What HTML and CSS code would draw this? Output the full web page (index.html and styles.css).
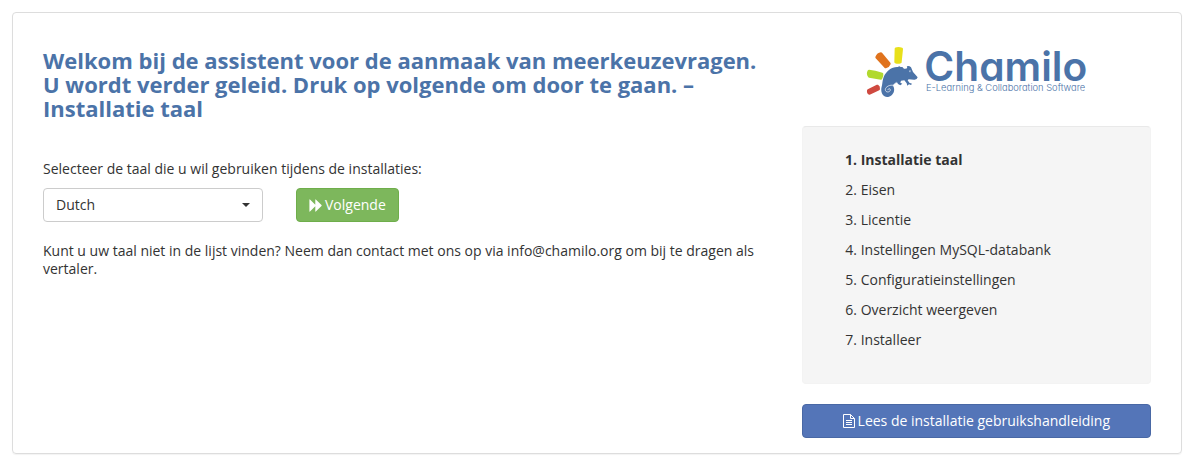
FILE: index.html
```html
<!DOCTYPE html>
<html lang="nl">
<head>
<meta charset="utf-8">
<meta name="viewport" content="width=device-width, initial-scale=1">
<title>Chamilo – Installatie taal</title>
<link rel="stylesheet" href="styles.css">
</head>
<body>
<div class="panel">
  <main class="content">
    <h1 class="title">Welkom bij de assistent voor de aanmaak van meerkeuzevragen. U wordt verder geleid. Druk op volgende om door te gaan. – Installatie taal</h1>
    <form class="language-form">
      <label class="label" for="language">Selecteer de taal die u wil gebruiken tijdens de installaties:</label>
      <div class="controls">
        <div class="select-wrap">
          <select class="select" id="language"><option>Dutch</option></select>
        </div>
        <button class="btn btn-next" type="button"><svg class="icon-forward" viewBox="0 0 13 13" aria-hidden="true"><path d="M.4.7Q.4 0 1 .5l5.3 5.200V.7q0-.7.5-.2l5.700 5.600q.4.4 0 .8l-5.700 5.600q-.5.5-.5-.2v-5L1 12.500q-.6.500-.6-.2z"/></svg>Volgende</button>
      </div>
    </form>
    <p class="note">Kunt u uw taal niet in de lijst vinden? Neem dan contact met ons op via info@chamilo.org om bij te dragen als vertaler.</p>
  </main>
  <aside class="sidebar">
    <svg class="logo" viewBox="15 18 666 162" role="img" aria-label="Chamilo">
      <g stroke-width="8" stroke-linejoin="round">
        <path fill="#e8e01b" stroke="#e8e01b" d="M108 26Q116 23 125 27L121 66Q114 69 107 66Z"/>
        <path fill="#e0731d" stroke="#e0731d" d="M50 52Q54 42 63 41L88 71Q85 79 77 81Z"/>
        <path fill="#b1d92e" stroke="#b1d92e" d="M27 93Q44 95 66 102Q67 109 63 115L28 109Q22 101 27 93Z"/>
        <path fill="#cf4a40" stroke="#cf4a40" d="M25 151L52 138Q57 141 56 147L29 160Q24 159 25 151Z"/>
      </g>
      <path fill="#4b73a8" d="M64 145C68 131 67 120 71 111C79 92 96 80 113 81L118 79L122 81L127 81L132 86Q139 87 142 84Q138 79 143 78Q148 77 153 82L159 96L173 112Q171 120 162 119L146 118L143 121L148 128L156 131L153 135L147 133L142 137L140 130L133 121L123 122L121 128L127 131L121 136L114 132L111 127L103 132L99 137C107 149 101 165 87 170C73 174 62 163 64 145Z"/>
      <g fill="none" stroke="#fff" stroke-width="2" stroke-linecap="round">
        <path d="M100 136C91 133 76 140 76 149C76 158 90 158 91 150C91 145 85 144 84 149"/>
        <path d="M99 136L108 128"/>
      </g>
      <circle cx="150" cy="94" r="3" fill="#a9bdd8"/>
      <circle cx="151" cy="94" r="1" fill="#4b73a8"/>
      <text class="logo-name" x="193" y="123">Chamilo</text>
      <text class="logo-tagline" x="198" y="153">E-Learning &amp; Collaboration Software</text>
    </svg>
    <ol class="steps">
      <li class="step step-active">Installatie taal</li>
      <li class="step">Eisen</li>
      <li class="step">Licentie</li>
      <li class="step">Instellingen MySQL-databank</li>
      <li class="step">Configuratieinstellingen</li>
      <li class="step">Overzicht weergeven</li>
      <li class="step">Installeer</li>
    </ol>
    <a class="btn btn-guide" href="#"><svg class="icon-file" viewBox="0 0 12 14" aria-hidden="true"><path d="M.5.5h7l4 4v9H.5zM7.500.5v4h4M3 6.500h6M3 8.500h6M3 10.500h6"/></svg>Lees de installatie gebruikshandleiding</a>
  </aside>
</div>
</body>
</html>
```
FILE: styles.css
```css
* {
  box-sizing: border-box;
}

body {
  margin: 0;
  padding: 12px;
  background: #fff;
  color: #333;
  font: 14px/18px "Open Sans", "Noto Sans", sans-serif;
}

.panel {
  display: grid;
  grid-template-columns: 2fr 1fr;
  padding: 32px 15px 15px;
  border: 1px solid #ddd;
  border-radius: 4px;
  box-shadow: 0 1px 1px rgba(0, 0, 0, 0.05);
}

.content,
.sidebar {
  min-width: 0;
  padding: 0 15px;
}

.title {
  margin: 3px 0 40px;
  color: #4b73a8;
  font-size: 22px;
  line-height: 24px;
}

.label {
  display: block;
  margin-bottom: 10px;
}

.controls {
  display: flex;
  gap: 33px;
}

.select-wrap {
  position: relative;
  width: 220px;
}

.select-wrap::after {
  content: "";
  position: absolute;
  top: 15px;
  right: 13px;
  border: 4px solid transparent;
  border-top-color: #333;
  border-bottom: 0;
  pointer-events: none;
}

.select {
  width: 100%;
  height: 34px;
  padding: 0 12px;
  border: 1px solid #ccc;
  border-radius: 4px;
  appearance: none;
  background: #fff;
  color: #333;
  font: inherit;
}

.btn {
  display: inline-flex;
  align-items: center;
  justify-content: center;
  gap: 3px;
  height: 34px;
  padding: 0 12px;
  border: 1px solid;
  border-radius: 4px;
  color: #fff;
  font: inherit;
  text-decoration: none;
}

.btn-next {
  background: #7db75c;
  border-color: #6fae4b;
}

.icon-forward {
  width: 13px;
  height: 13px;
  fill: #fff;
}

.note {
  margin: 20px 0 0;
}

.logo {
  display: block;
  width: 222px;
  height: 54px;
  margin: 1px auto 26px;
  overflow: visible;
}

.logo-name {
  fill: #4b73a8;
  font: 600 122px Inter, sans-serif;
  font-feature-settings: "cv11";
}

.logo-tagline {
  fill: #4b73a8;
  font: 300 28px Inter, sans-serif;
  font-feature-settings: "cv11";
}

.steps {
  margin: 0 0 20px;
  padding: 18px 19px 28px 58px;
  border: 1px solid #f3f3f3;
  border-top-color: #e9e9e9;
  border-radius: 4px;
  background: #f5f5f5;
}

.step {
  line-height: 30px;
}

.step-active {
  font-weight: 700;
}

.btn-guide {
  display: flex;
  background: #5475b8;
  border-color: #4968a5;
}

.icon-file {
  width: 12px;
  height: 14px;
  fill: none;
  stroke: #fff;
}
```
